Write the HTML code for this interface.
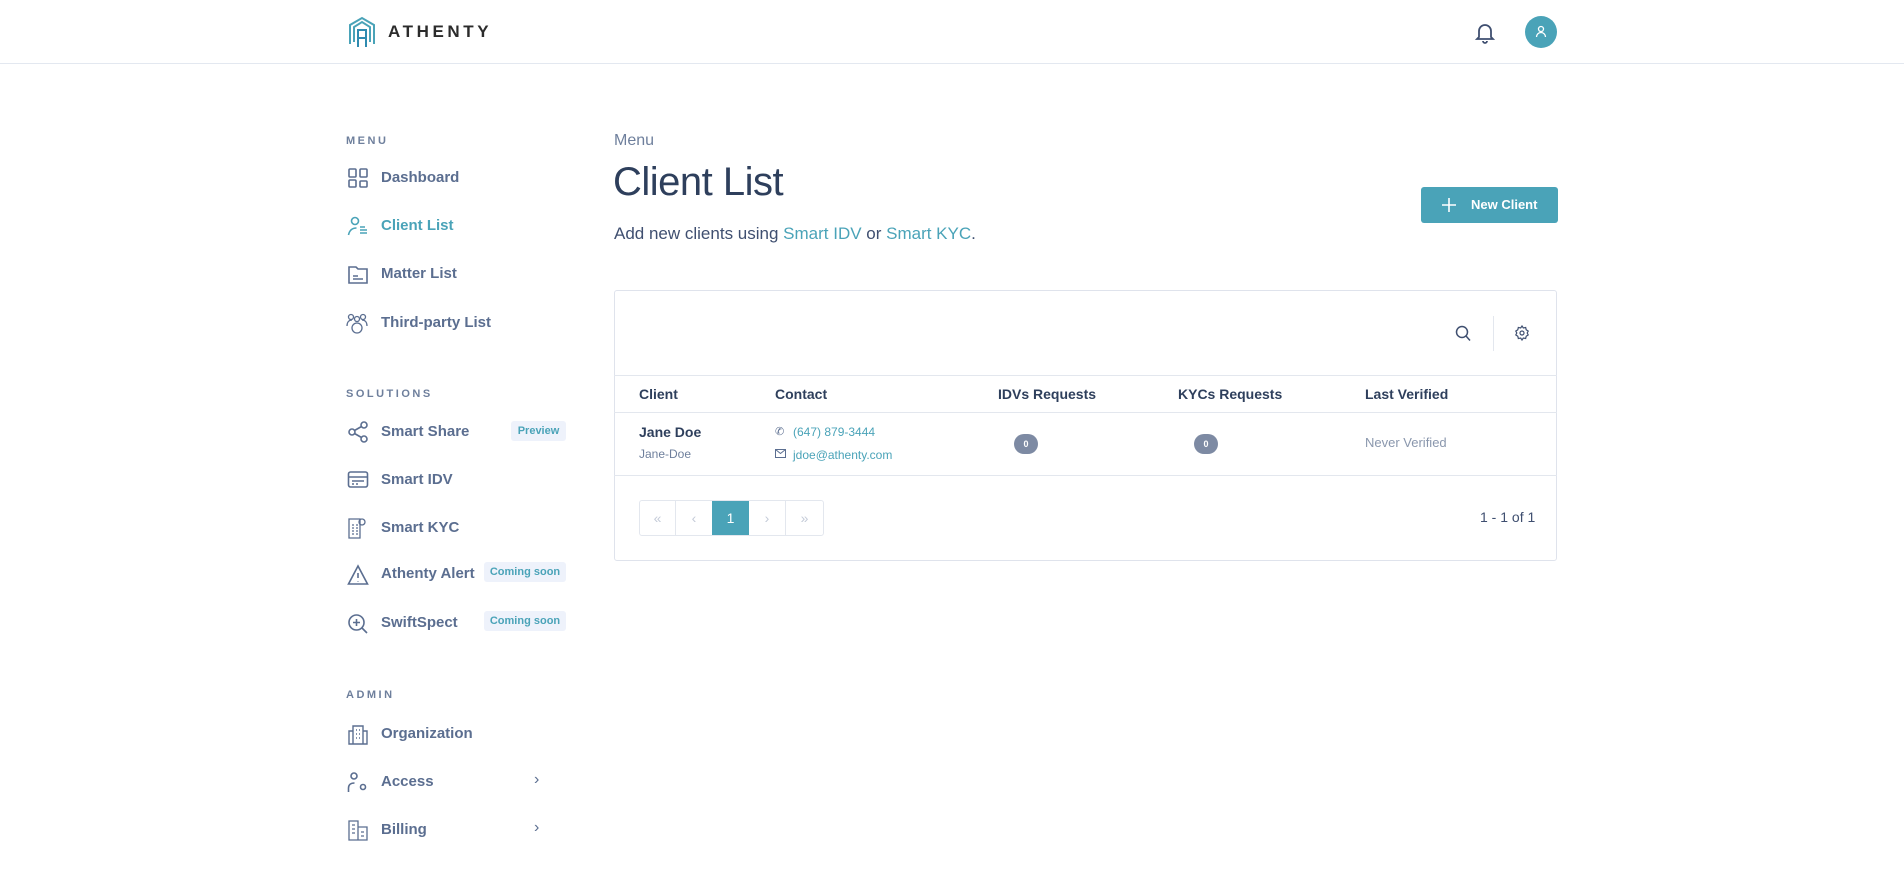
<!DOCTYPE html>
<html><head><meta charset="utf-8"><style>
*{box-sizing:border-box;margin:0;padding:0}
body{width:1904px;height:875px;background:#fff;font-family:"Liberation Sans",sans-serif;position:relative;overflow:hidden;color:#5b6e90}
.a{position:absolute;white-space:nowrap}
.hdr{position:absolute;left:0;top:0;width:1904px;height:64px;border-bottom:1px solid #e3e8f0}
.lab{font-size:11px;font-weight:bold;letter-spacing:2.5px;color:#6e7f9c}
.nav{font-size:15px;font-weight:bold;color:#5b6e90}
.ic{position:absolute;width:22px;height:22px}
.badge{position:absolute;background:#eef2fb;color:#4aa3b8;font-size:11px;font-weight:bold;border-radius:3px;height:20px;line-height:20px;text-align:center}
.th{font-size:14px;font-weight:bold;color:#2e3f5c}
.teal{color:#4aa3b8}
.cnt{position:absolute;width:24px;height:20px;border-radius:10px;background:#7d8aa3;color:#fff;font-size:9px;font-weight:bold;text-align:center;line-height:20px}
</style></head><body>
<div class="hdr"></div>
<svg class="a" style="left:348px;top:16px" width="28" height="32" viewBox="0 0 28 32" fill="none" stroke="#4aa3b8" stroke-width="2"><path d="M2 28V9L14 2l12 7v19"/><path d="M6 26V11l8-5 8 5v15"/><path d="M10 31V14h8v17M10 22h8" stroke="#2f8bb0"/></svg>
<div class="a" style="left:388px;top:22px;font-size:17px;font-weight:bold;letter-spacing:3.6px;color:#2b2b2b">ATHENTY</div>
<svg class="a" style="left:1475px;top:22px" width="20" height="22" viewBox="0 0 20 22" fill="none" stroke="#3f4f70" stroke-width="1.8"><path d="M4 15V9a6 6 0 0112 0v6l2 2H2z"/><path d="M8 19a2 2 0 004 0"/></svg>
<div class="a" style="left:1525px;top:16px;width:32px;height:32px;border-radius:50%;background:#4aa3b8"></div>
<svg class="a" style="left:1535px;top:25px" width="12" height="14" viewBox="0 0 12 14" fill="none" stroke="#fff" stroke-width="1.3"><circle cx="6" cy="4" r="2.5"/><path d="M1.5 12a4.5 4.5 0 019 0"/></svg>

<div class="a lab" style="left:346px;top:135px">MENU</div>
<svg class="ic" style="left:347px;top:167px" viewBox="0 0 22 22" fill="none" stroke="#5b6e90" stroke-width="1.6"><rect x="2" y="2" width="7" height="8" rx="1"/><rect x="13" y="2" width="7" height="8" rx="1"/><rect x="2" y="13" width="7" height="7" rx="1"/><rect x="13" y="14" width="7" height="6" rx="1"/></svg>
<div class="a nav" style="left:381px;top:169px">Dashboard</div>
<svg class="ic" style="left:347px;top:215px" viewBox="0 0 22 22" fill="none" stroke="#4aa3b8" stroke-width="1.6"><circle cx="8" cy="6" r="3.5"/><path d="M1.5 20c1-5 4-7 8-7M13 15h7M13 18h7M13 12h5"/></svg>
<div class="a nav teal" style="left:381px;top:217px">Client List</div>
<svg class="ic" style="left:347px;top:263px" viewBox="0 0 22 22" fill="none" stroke="#5b6e90" stroke-width="1.6"><path d="M2 4h7l2 2h9v14H2z"/><path d="M6 13h5M6 16h10"/></svg>
<div class="a nav" style="left:381px;top:265px">Matter List</div>
<svg class="ic" style="left:346px;top:312px" viewBox="0 0 22 22" fill="none" stroke="#5b6e90" stroke-width="1.3"><circle cx="5" cy="5" r="2.5"/><circle cx="11" cy="7" r="2.5"/><circle cx="17" cy="5" r="2.5"/><path d="M1 14c0-4 2-6 5-6M21 14c0-4-2-6-5-6"/><rect x="6" y="11" width="10" height="10" rx="5"/></svg>
<div class="a nav" style="left:381px;top:314px">Third-party List</div>

<div class="a lab" style="left:346px;top:388px">SOLUTIONS</div>
<svg class="ic" style="left:347px;top:421px" viewBox="0 0 22 22" fill="none" stroke="#5b6e90" stroke-width="1.6"><circle cx="5" cy="11" r="3"/><circle cx="17" cy="4" r="3"/><circle cx="17" cy="18" r="3"/><path d="M7.5 9.5l7-4M7.5 12.5l7 4"/></svg>
<div class="a nav" style="left:381px;top:423px">Smart Share</div>
<div class="badge" style="left:511px;top:421px;width:55px">Preview</div>
<svg class="ic" style="left:347px;top:469px" viewBox="0 0 22 22" fill="none" stroke="#5b6e90" stroke-width="1.6"><rect x="1.5" y="3" width="19" height="15" rx="2"/><path d="M1.5 8h19M5 12h12M5 15h2M9 15h2"/></svg>
<div class="a nav" style="left:381px;top:471px">Smart IDV</div>
<svg class="ic" style="left:347px;top:517px" viewBox="0 0 22 22" fill="none" stroke="#5b6e90" stroke-width="1.3"><path d="M2 2h11v19H2z"/><circle cx="15" cy="5" r="3"/><path d="M5 8h2M5 11h2M5 14h2M5 17h2M9 8h2M9 11h2M9 14h2M9 17h2"/></svg>
<div class="a nav" style="left:381px;top:519px">Smart KYC</div>
<svg class="ic" style="left:347px;top:564px" viewBox="0 0 22 22" fill="none" stroke="#5b6e90" stroke-width="1.6"><path d="M11 2L1.5 20h19z"/><path d="M11 9v5M11 17v.5"/></svg>
<div class="a nav" style="left:381px;top:565px">Athenty Alert</div>
<div class="badge" style="left:484px;top:562px;width:82px">Coming soon</div>
<svg class="ic" style="left:347px;top:613px" viewBox="0 0 22 22" fill="none" stroke="#5b6e90" stroke-width="1.6"><circle cx="9.5" cy="9.5" r="7.5"/><path d="M15 15l5 5M9.5 6v7M6 9.5h7"/></svg>
<div class="a nav" style="left:381px;top:614px">SwiftSpect</div>
<div class="badge" style="left:484px;top:611px;width:82px">Coming soon</div>

<div class="a lab" style="left:346px;top:689px">ADMIN</div>
<svg class="ic" style="left:347px;top:723px" viewBox="0 0 22 22" fill="none" stroke="#5b6e90" stroke-width="1.4"><path d="M2 8h4v13H2zM16 8h4v13h-4zM6 3h10v18H6z"/><path d="M9 7h1M12 7h1M9 11h1M12 11h1M9 15h1M12 15h1"/></svg>
<div class="a nav" style="left:381px;top:725px">Organization</div>
<svg class="ic" style="left:347px;top:771px" viewBox="0 0 22 22" fill="none" stroke="#5b6e90" stroke-width="1.6"><circle cx="7" cy="5" r="3"/><path d="M1.5 21v-4c0-3 2-5 6-5"/><circle cx="16" cy="16" r="2.5"/></svg>
<div class="a nav" style="left:381px;top:773px">Access</div>
<div class="a" style="left:534px;top:771px;font-size:16px;color:#5b6e90">›</div>
<svg class="ic" style="left:347px;top:819px" viewBox="0 0 22 22" fill="none" stroke="#5b6e90" stroke-width="1.3"><path d="M2 2h9v19H2zM11 8h9v13h-9z"/><path d="M5 6h3M5 10h3M5 14h3M14 13h3M14 17h3"/></svg>
<div class="a nav" style="left:381px;top:821px">Billing</div>
<div class="a" style="left:534px;top:819px;font-size:16px;color:#5b6e90">›</div>

<div class="a" style="left:614px;top:132px;font-size:16px;color:#6e7f9c">Menu</div>
<div class="a" style="left:613px;top:160px;font-size:40px;color:#2e3f5c;letter-spacing:-0.5px">Client List</div>
<div class="a" style="left:614px;top:224px;font-size:17px;color:#3f4f70">Add new clients using <span class="teal">Smart IDV</span> or <span class="teal">Smart KYC</span>.</div>
<div class="a" style="left:1421px;top:187px;width:137px;height:36px;border-radius:3px;background:#4aa3b8;color:#fff;font-size:13px;font-weight:bold;line-height:36px;padding-left:50px">New Client</div>
<svg class="a" style="left:1441px;top:197px" width="16" height="16" viewBox="0 0 16 16" stroke="#fff" stroke-width="1.6"><path d="M8 1v14M1 8h14"/></svg>

<div class="a" style="left:614px;top:290px;width:943px;height:271px;border:1px solid #dfe3ec;border-radius:3px"></div>
<svg class="a" style="left:1455px;top:325px" width="16" height="17" viewBox="0 0 16 17" fill="none" stroke="#3f4f70" stroke-width="1.5"><circle cx="7" cy="7" r="5.5"/><path d="M11 11l4 4.5"/></svg>
<div class="a" style="left:1493px;top:316px;width:1px;height:35px;background:#e3e7ee"></div>
<svg class="a" style="left:1514px;top:325px" width="16" height="16" viewBox="0 0 24 24" fill="none" stroke="#3f4f70" stroke-width="1.8"><circle cx="12" cy="12" r="3"/><path d="M12 1.5l2 3 3.5-.8.8 3.5 3 2-1.5 2.8 1.5 2.8-3 2-.8 3.5-3.5-.8-2 3-2-3-3.5.8-.8-3.5-3-2 1.5-2.8-1.5-2.8 3-2 .8-3.5 3.5.8z"/></svg>
<div class="a" style="left:614px;top:375px;width:943px;height:1px;background:#e3e7ee"></div>
<div class="a" style="left:614px;top:412px;width:943px;height:1px;background:#e3e7ee"></div>
<div class="a" style="left:614px;top:475px;width:943px;height:1px;background:#e3e7ee"></div>
<div class="a th" style="left:639px;top:386px">Client</div>
<div class="a th" style="left:775px;top:386px">Contact</div>
<div class="a th" style="left:998px;top:386px">IDVs Requests</div>
<div class="a th" style="left:1178px;top:386px">KYCs Requests</div>
<div class="a th" style="left:1365px;top:386px">Last Verified</div>
<div class="a th" style="left:639px;top:424px">Jane Doe</div>
<div class="a" style="left:639px;top:447px;font-size:12px;color:#6e7f9c">Jane-Doe</div>
<div class="a" style="left:775px;top:425px;font-size:11px;color:#5b6e90">✆</div>
<div class="a teal" style="left:793px;top:425px;font-size:12px">(647) 879-3444</div>
<svg class="a" style="left:775px;top:449px" width="11" height="9" viewBox="0 0 11 9" fill="none" stroke="#5b6e90" stroke-width="1"><rect x=".5" y=".5" width="10" height="8"/><path d="M.5 .5l5 4 5-4"/></svg>
<div class="a teal" style="left:793px;top:448px;font-size:12px">jdoe@athenty.com</div>
<div class="cnt" style="left:1014px;top:434px">0</div>
<div class="cnt" style="left:1194px;top:434px">0</div>
<div class="a" style="left:1365px;top:435px;font-size:13px;color:#8a97ad">Never Verified</div>

<div class="a" style="left:639px;top:500px;width:185px;height:36px;border:1px solid #e3e7ee;border-radius:3px;display:flex;font-size:14px;color:#c4cbd8;line-height:34px;text-align:center">
<div style="width:36px;border-right:1px solid #e3e7ee">«</div><div style="width:36px">‹</div><div style="width:37px;background:#4aa3b8;color:#fff">1</div><div style="width:37px;border-right:1px solid #e3e7ee">›</div><div style="width:37px">»</div></div>
<div class="a" style="left:1480px;top:509px;font-size:14px;color:#3f4f70">1 - 1 of 1</div>
</body></html>
